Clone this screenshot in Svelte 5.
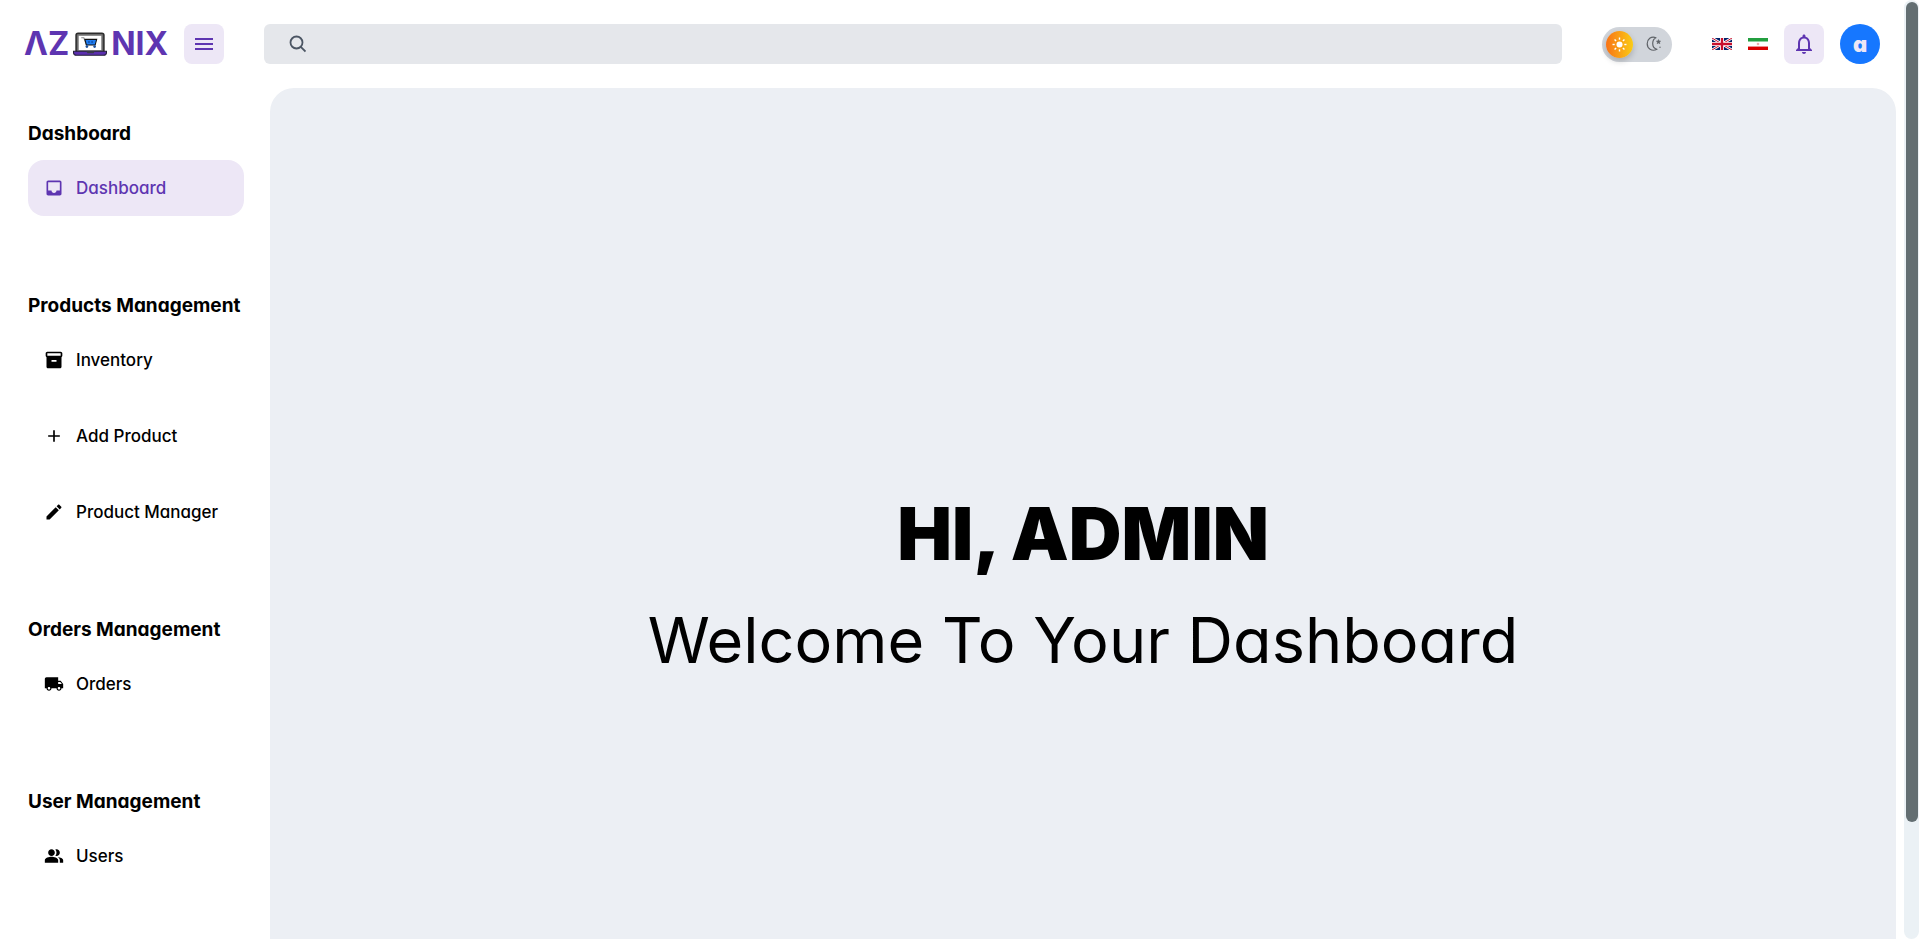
<script>
  const sections = [
    { title: 'Dashboard', items: [{ label: 'Dashboard', icon: 'inbox', active: true }] },
    {
      title: 'Products Management',
      items: [
        { label: 'Inventory', icon: 'inventory' },
        { label: 'Add Product', icon: 'add' },
        { label: 'Product Manager', icon: 'edit' }
      ]
    },
    { title: 'Orders Management', items: [{ label: 'Orders', icon: 'truck' }] },
    { title: 'User Management', items: [{ label: 'Users', icon: 'people' }] }
  ];

  const icons = {
    inbox: 'M19 3H5c-1.1 0-2 .9-2 2v14c0 1.1.9 2 2 2h14c1.1 0 2-.9 2-2V5c0-1.1-.9-2-2-2zm0 12h-4c0 1.66-1.35 3-3 3s-3-1.34-3-3H4.99V5H19v10z',
    inventory: 'M20 2H4c-1 0-2 .9-2 2v3.01c0 .72.43 1.34 1 1.69V20c0 1.1 1.1 2 2 2h14c.9 0 2-.9 2-2V8.7c.57-.35 1-.97 1-1.69V4c0-1.1-1-2-2-2zm-5 12H9v-2h6v2zm5-7H4V4h16v3z',
    add: 'M19 13h-6v6h-2v-6H5v-2h6V5h2v6h6v2z',
    edit: 'M3 17.25V21h3.75L17.81 9.94l-3.75-3.75L3 17.25zM20.71 7.04c.39-.39.39-1.02 0-1.41l-2.34-2.34c-.39-.39-1.02-.39-1.41 0l-1.83 1.83 3.75 3.75 1.83-1.83z',
    truck: 'M20 8h-3V4H3c-1.1 0-2 .9-2 2v11h2c0 1.66 1.34 3 3 3s3-1.34 3-3h6c0 1.66 1.34 3 3 3s3-1.34 3-3h2v-5l-3-4zM6 18.5c-.83 0-1.5-.67-1.5-1.5s.67-1.5 1.5-1.5 1.5.67 1.5 1.5-.67 1.5-1.5 1.5zm13.5-9l1.96 2.5H17V9.500h2.500zm-1.500 9c-.83 0-1.500-.67-1.500-1.500s.67-1.500 1.500-1.500 1.500.67 1.500 1.500-.67 1.500-1.500 1.500z',
    people: 'M16.67 13.13C18.04 14.06 19 15.32 19 17v3h4v-3c0-2.18-3.57-3.47-6.33-3.87zM15 12c2.210 0 4-1.790 4-4s-1.790-4-4-4c-.47 0-.91.1-1.33.24C14.500 5.270 15 6.580 15 8s-.5 2.730-1.330 3.760c.42.14.86.24 1.330.24zM9 12c2.210 0 4-1.790 4-4s-1.790-4-4-4-4 1.790-4 4 1.790 4 4 4zm0 1c-2.670 0-8 1.340-8 4v3h16v-3c0-2.660-5.330-4-8-4z'
  };

  const rays = [0, 45, 90, 135, 180, 225, 270, 315];

  let dark = $state(false);
  let query = $state('');
</script>

<div class="app">
  <div class="page">
    <header>
      <div class="brand">
        <a class="logo" href="#home" aria-label="Azonix">
          <span>ΛZ</span>
          <svg class="laptop" viewBox="0 0 33 23" aria-hidden="true">
            <rect x="3" y="1" width="27" height="19" rx="2" fill="#666" stroke="#2c2c2c" stroke-width="1.500" />
            <rect x="5" y="3" width="23" height="15" fill="#fff" stroke="#777" stroke-width="1" />
            <path d="M8 5.500h2.500l2.500 7" fill="none" stroke="#888" stroke-width="1" />
            <path d="M11.500 7h11.500l-1.500 5.500h-8.500z" fill="#1f7cf0" stroke="#111" stroke-width="1" />
            <path d="M15.500 8.500v2M18.500 8.500v2" stroke="#0b3d8f" stroke-width="1" />
            <circle cx="13.500" cy="14" r="1.300" fill="#1b4f9c" />
            <circle cx="21" cy="14" r="1.300" fill="#1b4f9c" />
            <path d="M.5 18.500h32v1.500c0 1.500-1 2.500-3 2.500H3.500c-2 0-3-1-3-2.500z" fill="#5b2fae" stroke="#26203a" stroke-width="1" />
            <path d="M13 18.500h8l-1 2h-6z" fill="#3a3a4a" />
          </svg>
          <span>NIX</span>
        </a>
        <button class="square" aria-label="Toggle menu">
          <svg width="24" height="24" viewBox="0 0 24 24"><path d="M3 18h18v-2H3v2zm0-5h18v-2H3v2zm0-7v2h18V6H3z" fill="currentColor" /></svg>
        </button>
      </div>

      <label class="search">
        <svg width="18" height="18" viewBox="0 0 18 18" aria-hidden="true">
          <circle cx="8.500" cy="7.500" r="6" fill="none" stroke="currentColor" stroke-width="1.800" />
          <path d="M12.800 11.800l4.700 4.700" stroke="currentColor" stroke-width="1.800" />
        </svg>
        <input type="search" aria-label="Search" bind:value={query} />
      </label>

      <label class="toggle">
        <input type="checkbox" aria-label="Dark theme" bind:checked={dark} />
        <span class="knob">
          <svg width="15" height="15" viewBox="0 0 15 15" aria-hidden="true">
            <circle cx="7.500" cy="7.500" r="3" fill="#fff" />
            {#each rays as angle}
              <path d="M7.500 .5v2.200" stroke="#fff" stroke-width="1.400" transform="rotate({angle} 7.500 7.500)" />
            {/each}
          </svg>
        </span>
        <svg class="moon" width="16" height="16" viewBox="0 0 16 16" aria-hidden="true">
          <path d="M10 1.700C5 -.2 1.200 3.300 1.200 7.800s4.300 8.200 9.800 5.500C8.300 12.800 6.700 10.400 6.700 7.600S7.900 2.500 10 1.700z" fill="none" stroke="currentColor" stroke-width="1.200" stroke-linejoin="round" />
          <path d="M12.500 3.600l.6 1.400 1.500 .2-1.100 1 .3 1.500-1.300-.8-1.300 .8 .3-1.500-1.100-1 1.500-.2z" fill="currentColor" stroke="currentColor" stroke-width=".6" />
          <circle cx="14" cy="11.300" r=".7" fill="currentColor" />
        </svg>
      </label>

      <div class="actions">
        <button class="flag" aria-label="English">
          <svg width="20" height="12" viewBox="0 0 60 36" preserveAspectRatio="none">
            <rect width="60" height="36" fill="#012169" />
            <path d="M0 0l60 36M60 0L0 36" stroke="#fff" stroke-width="8" />
            <path d="M0 0l60 36M60 0L0 36" stroke="#c8102e" stroke-width="3" />
            <path d="M30 0v36M0 18h60" stroke="#fff" stroke-width="12" />
            <path d="M30 0v36M0 18h60" stroke="#c8102e" stroke-width="7" />
          </svg>
        </button>
        <button class="flag" aria-label="Persian">
          <svg width="20" height="12" viewBox="0 0 20 12">
            <rect width="20" height="12" fill="#fff" />
            <rect width="20" height="3" fill="#239f40" />
            <rect y="3" width="20" height="1" fill="#8fcf9f" />
            <rect y="8" width="20" height="1" fill="#ec8f8f" />
            <rect y="9" width="20" height="3" fill="#da0000" />
            <circle cx="10" cy="6" r="1.300" fill="#ecb0b0" />
          </svg>
        </button>
        <button class="square" aria-label="Notifications">
          <svg width="24" height="24" viewBox="0 0 24 24"><path d="M12 22c1.100 0 2-.9 2-2h-4c0 1.100.9 2 2 2zm6-6v-5c0-3.070-1.630-5.640-4.500-6.320V4c0-.83-.67-1.500-1.500-1.500s-1.500.67-1.500 1.500v.68C7.640 5.360 6 7.920 6 11v5l-2 2v1h16v-1l-2-2zm-2 1H8v-6c0-2.480 1.510-4.500 4-4.500s4 2.020 4 4.500v6z" fill="currentColor" /></svg>
        </button>
        <button class="avatar" aria-label="Account">a</button>
      </div>
    </header>

    <div class="body">
      <nav aria-label="Main">
        {#each sections as section}
          <section>
            <h2>{section.title}</h2>
            <ul>
              {#each section.items as item}
                <li>
                  <a href="#{item.icon}" class:active={item.active}>
                    <svg width="20" height="20" viewBox="0 0 24 24" aria-hidden="true"><path d={icons[item.icon]} fill="currentColor" /></svg>
                    {item.label}
                  </a>
                </li>
              {/each}
            </ul>
          </section>
        {/each}
      </nav>
      <main>
        <h1>HI, ADMIN</h1>
        <p>Welcome To Your Dashboard</p>
      </main>
    </div>
  </div>
  <div class="rail"><div class="thumb"></div></div>
</div>

<style>
  :global(body) {
    background: #fff;
    overflow: hidden;
  }
  .app {
    display: flex;
    height: 100vh;
    overflow: hidden;
    color: #000;
    font-family: Inter, "Open Sans", sans-serif;
    font-feature-settings: "cv11";
  }
  .page {
    flex: 1;
    min-width: 0;
  }
  button {
    padding: 0;
    border: 0;
    font: inherit;
    font-feature-settings: inherit;
    cursor: pointer;
  }
  svg {
    display: block;
    flex: none;
  }
  header {
    display: flex;
    align-items: center;
    gap: 40px;
    padding: 24px;
  }
  .brand {
    display: flex;
    align-items: center;
    justify-content: space-between;
    width: 200px;
  }
  .logo {
    display: flex;
    align-items: center;
    gap: 4px;
    color: #5e35b1;
    font-size: 32px;
    font-weight: 700;
    line-height: 32px;
    text-decoration: none;
  }
  .laptop {
    width: 34px;
    height: 24px;
  }
  .square {
    display: grid;
    place-items: center;
    width: 40px;
    height: 40px;
    border-radius: 8px;
    background: #ede7f6;
    color: #5e35b1;
  }
  .search {
    display: flex;
    flex: 1;
    align-items: center;
    gap: 16px;
    height: 40px;
    padding: 0 24px;
    border-radius: 6px;
    background: #e5e7eb;
    color: #4b5563;
  }
  .search input {
    flex: 1;
    min-width: 0;
    border: 0;
    outline: 0;
    background: none;
    font: inherit;
    font-size: 16px;
  }
  .toggle {
    display: flex;
    align-items: center;
    justify-content: space-between;
    box-sizing: border-box;
    width: 70px;
    height: 35px;
    padding: 0 10px 0 4px;
    border-radius: 18px;
    background: #d1d5db;
    cursor: pointer;
  }
  .toggle input {
    position: absolute;
    opacity: 0;
  }
  .knob {
    display: grid;
    place-items: center;
    width: 27px;
    height: 27px;
    border-radius: 50%;
    background: linear-gradient(90deg, #f97316, #facc15);
    box-shadow: 0 3px 6px rgba(0, 0, 0, 0.2);
  }
  .moon {
    color: #5f6368;
  }
  .actions {
    display: flex;
    align-items: center;
    gap: 16px;
  }
  .flag {
    background: none;
  }
  .avatar {
    width: 40px;
    height: 40px;
    border-radius: 50%;
    background: #1677ff;
    color: #ede7f6;
    font-size: 22px;
    font-weight: 900;
    line-height: 40px;
  }
  .body {
    display: flex;
  }
  nav {
    display: flex;
    flex: none;
    flex-direction: column;
    gap: 76px;
    box-sizing: border-box;
    width: 270px;
    padding: 32px 26px 0 28px;
  }
  h2 {
    margin: 0 0 12px;
    font-size: 19px;
    font-weight: 700;
    line-height: 28px;
    white-space: nowrap;
  }
  ul {
    display: flex;
    flex-direction: column;
    gap: 20px;
    margin: 0;
    padding: 0;
    list-style: none;
  }
  nav a {
    display: flex;
    align-items: center;
    gap: 12px;
    height: 56px;
    padding: 0 16px;
    border-radius: 16px;
    color: #000;
    font-size: 17px;
    font-weight: 500;
    text-decoration: none;
  }
  nav a.active {
    background: #ede7f6;
    color: #5e35b1;
  }
  main {
    display: flex;
    flex: 1;
    flex-direction: column;
    align-items: center;
    justify-content: center;
    gap: 24px;
    box-sizing: border-box;
    height: calc(115vh - 84px);
    margin-right: 8px;
    border-radius: 24px;
    background: #eceff4;
  }
  h1 {
    margin: 0;
    font-size: 73px;
    font-weight: 900;
    line-height: 84px;
  }
  p {
    margin: 0;
    font-size: 63px;
    font-weight: 400;
    line-height: 80px;
  }
  .rail {
    flex: none;
    width: 12px;
    padding: 2px 1px 0 2px;
    border-radius: 8px;
    background: #ebf1f5;
  }
  .thumb {
    height: 87.5%;
    border-radius: 6px;
    background: #636e72;
  }
</style>
